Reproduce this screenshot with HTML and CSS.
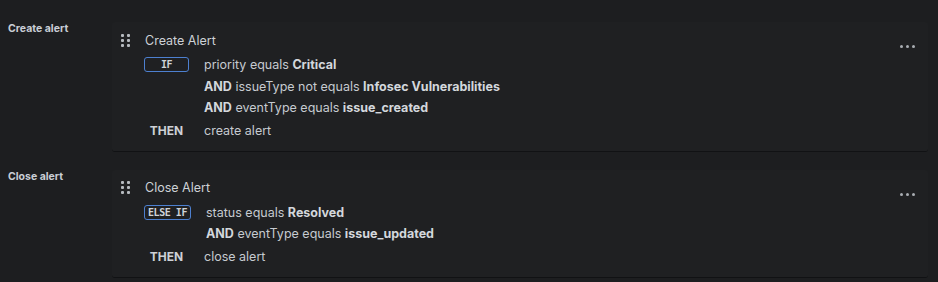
FILE: index.html
```html
<!DOCTYPE html>
<html>
<head>
<meta charset="utf-8">
<link rel="stylesheet" href="styles.css">
</head>
<body>
<div class="rules">
  <div class="rule">
    <div class="rule-label">Create alert</div>
    <div class="card">
      <div class="card-head">
        <span class="handle"><i></i><i></i><i></i><i></i><i></i><i></i></span>
        <span class="title">Create Alert</span>
        <span class="more"><i></i><i></i><i></i></span>
      </div>
      <div class="clause">
        <div class="kw"><span class="badge">IF</span></div>
        <div class="conds">
          <div class="cond">priority equals <b>Critical</b></div>
          <div class="cond"><b>AND</b> issueType not equals <b>Infosec Vulnerabilities</b></div>
          <div class="cond"><b>AND</b> eventType equals <b>issue_created</b></div>
        </div>
      </div>
      <div class="clause then">
        <div class="kw fixed"><span class="then-kw">THEN</span></div>
        <div class="conds"><div class="cond">create alert</div></div>
      </div>
    </div>
  </div>
  <div class="rule">
    <div class="rule-label">Close alert</div>
    <div class="card">
      <div class="card-head">
        <span class="handle"><i></i><i></i><i></i><i></i><i></i><i></i></span>
        <span class="title">Close Alert</span>
        <span class="more"><i></i><i></i><i></i></span>
      </div>
      <div class="clause">
        <div class="kw"><span class="badge">ELSE IF</span></div>
        <div class="conds">
          <div class="cond">status equals <b>Resolved</b></div>
          <div class="cond"><b>AND</b> eventType equals <b>issue_updated</b></div>
        </div>
      </div>
      <div class="clause then">
        <div class="kw fixed"><span class="then-kw">THEN</span></div>
        <div class="conds"><div class="cond">close alert</div></div>
      </div>
    </div>
  </div>
</div>
</body>
</html>
```
FILE: styles.css
```css
* { box-sizing: border-box; }
html, body { margin: 0; padding: 0; }
body {
  background: #1d1e20;
  color: #c6cad0;
  font-family: "Inter", "Noto Sans", sans-serif;
  font-size: 12.5px;
  width: 938px;
  height: 282px;
  overflow: hidden;
}
.rules {
  display: flex;
  flex-direction: column;
  gap: 18px;
  padding: 22px 10px 0 0;
}
.rule {
  display: flex;
}
.rule-label {
  width: 112px;
  padding: 0 0 0 8px;
  font-size: 10.5px;
  font-weight: 700;
  color: #c9ced6;
}
.card {
  flex: 1;
  background: #1f2022;
  border-bottom: 1px solid #111214;
  border-radius: 3px;
  padding: 10px 10px 9px 9px;
}
.card-head {
  display: flex;
  align-items: center;
  height: 16px;
  margin-bottom: 9px;
}
.handle {
  display: grid;
  grid-template-columns: 3px 3px;
  grid-template-rows: 3px 3px 3px;
  gap: 2px 3px;
  width: 24px;
}
.handle i {
  display: block;
  width: 3px;
  height: 3px;
  border-radius: 1px;
  background: #b6babf;
}
.title {
  flex: 1;
  font-size: 12.5px;
  color: #cdd1d6;
}
.more {
  display: flex;
  gap: 3px;
  margin-right: 3px;
  margin-top: 13px;
}
.more i {
  display: block;
  width: 3px;
  height: 3px;
  border-radius: 50%;
  background: #a9adb2;
}
.clause {
  display: flex;
  gap: 15px;
  padding-left: 23px;
}
.kw {
  display: flex;
  justify-content: center;
  align-items: flex-start;
  min-width: 45px;
}
.badge {
  display: inline-block;
  min-width: 45px;
  height: 15px;
  line-height: 13px;
  border: 1px solid #4d80d0;
  border-radius: 3px;
  padding: 0 3px;
  text-align: center;
  font-family: "DejaVu Sans Mono", "Liberation Mono", monospace;
  font-size: 10px;
  letter-spacing: -0.45px;
  font-weight: 700;
  color: #cfd3d8;
}
.then-kw {
  font-weight: 700;
  font-size: 12px;
  color: #cdd1d6;
  line-height: 22px;
}
.conds {
  display: flex;
  flex-direction: column;
}
.cond {
  height: 21.5px;
  line-height: 15px;
}
.then { margin-top: -2px; }
.then .cond { line-height: 22px; height: 22px; }
.fixed { width: 45px; }
b { font-weight: 700; color: #d3d7dc; }
```
